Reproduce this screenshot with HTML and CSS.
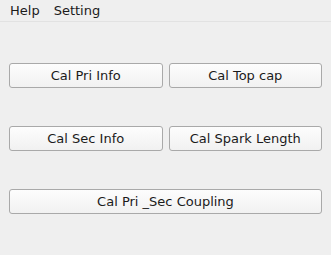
FILE: index.html
```html
<!DOCTYPE html>
<html>
<head>
  <meta charset="UTF-8">
  <title>Tesla Coil Calculator</title>
  <link rel="stylesheet" href="styles.css">
</head>
<body>
  <div class="window">
    <div class="menu-bar">
      <span class="menu-item">Help</span>
      <span class="menu-item">Setting</span>
    </div>

    <div class="content">
      <div class="button-row">
        <button class="push-button">Cal Pri Info</button>
        <button class="push-button">Cal Top cap</button>
      </div>
      <div class="button-row">
        <button class="push-button">Cal Sec Info</button>
        <button class="push-button">Cal Spark Length</button>
      </div>
      <div class="button-row">
        <button class="push-button wide">Cal Pri _Sec Coupling</button>
      </div>
    </div>
  </div>
</body>
</html>
```

FILE: styles.css
```css
body {
  margin: 0;
  background: #efefef;
  font-family: "DejaVu Sans", sans-serif;
  font-size: 13px;
  color: #1b1b1b;
}

.window {
  width: 331px;
  height: 255px;
  background: #efefef;
}

.menu-bar {
  display: flex;
  height: 22px;
  padding-left: 3px;
  border-bottom: 1px solid #e2e2e2;
  box-sizing: border-box;
  align-items: center;
}

.menu-item {
  padding: 0 7px;
  line-height: 21px;
}

.content {
  padding: 41px 9px 0 9px;
  display: flex;
  flex-direction: column;
  gap: 38px;
}

.button-row {
  display: flex;
  gap: 6px;
}

.push-button {
  width: 154px;
  height: 25px;
  padding: 0;
  border: 1px solid #a9a9a9;
  border-radius: 3px;
  background: linear-gradient(#fdfdfd, #f1f1f1);
  font-family: "DejaVu Sans", sans-serif;
  font-size: 13px;
  color: #1b1b1b;
  box-sizing: border-box;
}

.push-button.wide {
  width: 313px;
}
```
